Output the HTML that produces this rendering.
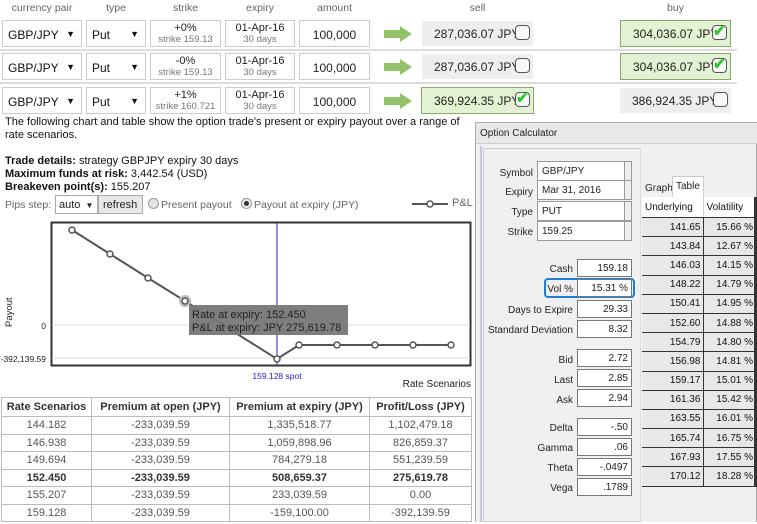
<!DOCTYPE html>
<html><head><meta charset="utf-8"><style>
*{box-sizing:border-box;margin:0;padding:0}
body{width:757px;height:524px;overflow:hidden;background:#fff;font-family:"Liberation Sans",Arial,sans-serif;font-size:11px;color:#222;position:relative}
.a{position:absolute}
.hd{color:#666;font-size:10.5px;text-align:center;top:2px}
.bx{position:absolute;border:1px solid #ccc;background:#fff}
.sel{font-size:12px;padding:7px 0 0 5px;color:#111}
.sel b{position:absolute;right:6px;top:8px;font-size:9px}
.st{text-align:center;font-size:11px;line-height:11px;padding-top:2px;white-space:nowrap;overflow:hidden}
.st span{color:#777;font-size:9.5px}
.am{text-align:center;font-size:12px;padding-top:7px}
.pr{position:absolute;background:#eee;font-size:12px;padding:6px 0 0 12px;height:25px;width:111px;white-space:nowrap}
.pr.g{background:#e2f2d2;border:1px solid #8aa86e}
.cb{position:absolute;right:3px;top:4px;width:15px;height:15px;border:1px solid #555;border-radius:4px;background:#f8f8f8}
.cb.k::after{content:"✔";position:absolute;left:0;top:-4px;color:#2c2;font-size:15px;font-weight:bold}
.arr{position:absolute;width:28px;height:16px}
.sep{position:absolute;left:0;width:737px;height:2px;background:#ddd}
.ft{position:absolute;font-size:10px;text-align:right;width:120px;white-space:nowrap}
.fi{position:absolute;background:#fff;border:1px solid #777;font-size:10px;text-align:right;padding:3px 3px 0 0;height:18px}
.dd{position:absolute;background:#fff;border:1px solid #999;font-size:10px;padding:4px 0 0 4px;height:20px;width:95px}
.dd::after{content:"";position:absolute;right:0;top:0;width:6px;height:18px;border-left:1px solid #999;background:#eee}
table{border-collapse:collapse}
</style></head><body>
<div class="a hd" style="left:2px;width:80px">currency pair</div>
<div class="a hd" style="left:86px;width:60px">type</div>
<div class="a hd" style="left:150px;width:71px">strike</div>
<div class="a hd" style="left:225px;width:70px">expiry</div>
<div class="a hd" style="left:299px;width:71px">amount</div>
<div class="a hd" style="left:422px;width:111px">sell</div>
<div class="a hd" style="left:620px;width:111px">buy</div>

<div class="bx sel" style="left:2px;top:20px;width:80px;height:27px">GBP/JPY<b>▼</b></div>
<div class="bx sel" style="left:86px;top:20px;width:60px;height:27px">Put<b>▼</b></div>
<div class="bx st" style="left:150px;top:20px;width:71px;height:27px">+0%<br><span>strike 159.13</span></div>
<div class="bx st" style="left:225px;top:20px;width:70px;height:27px">01-Apr-16<br><span>30 days</span></div>
<div class="bx am" style="left:299px;top:20px;width:71px;height:27px">100,000</div>
<svg class="arr" style="left:384px;top:26px" viewBox="0 0 28 16"><path d="M0 4H16V0L28 8 16 16V12H0Z" fill="#92c36a"/></svg>
<div class="pr" style="left:422px;top:21px">287,036.07 JPY<div class="cb"></div></div>
<div class="pr g" style="left:620px;top:20px;height:27px">304,036.07 JPY<div class="cb k"></div></div>
<div class="sep" style="top:49px"></div>

<div class="bx sel" style="left:2px;top:53px;width:80px;height:27px">GBP/JPY<b>▼</b></div>
<div class="bx sel" style="left:86px;top:53px;width:60px;height:27px">Put<b>▼</b></div>
<div class="bx st" style="left:150px;top:53px;width:71px;height:27px">-0%<br><span>strike 159.13</span></div>
<div class="bx st" style="left:225px;top:53px;width:70px;height:27px">01-Apr-16<br><span>30 days</span></div>
<div class="bx am" style="left:299px;top:53px;width:71px;height:27px">100,000</div>
<svg class="arr" style="left:384px;top:59px" viewBox="0 0 28 16"><path d="M0 4H16V0L28 8 16 16V12H0Z" fill="#92c36a"/></svg>
<div class="pr" style="left:422px;top:54px">287,036.07 JPY<div class="cb"></div></div>
<div class="pr g" style="left:620px;top:53px;height:27px">304,036.07 JPY<div class="cb k"></div></div>
<div class="sep" style="top:82px"></div>

<div class="bx sel" style="left:2px;top:87px;width:80px;height:27px">GBP/JPY<b>▼</b></div>
<div class="bx sel" style="left:86px;top:87px;width:60px;height:27px">Put<b>▼</b></div>
<div class="bx st" style="left:150px;top:87px;width:71px;height:27px">+1%<br><span>strike 160.721</span></div>
<div class="bx st" style="left:225px;top:87px;width:70px;height:27px">01-Apr-16<br><span>30 days</span></div>
<div class="bx am" style="left:299px;top:87px;width:71px;height:27px">100,000</div>
<svg class="arr" style="left:384px;top:93px" viewBox="0 0 28 16"><path d="M0 4H16V0L28 8 16 16V12H0Z" fill="#92c36a"/></svg>
<div class="pr g" style="left:421px;top:87px;width:113px;height:27px">369,924.35 JPY<div class="cb k"></div></div>
<div class="pr" style="left:620px;top:88px">386,924.35 JPY<div class="cb"></div></div>

<div class="a" style="left:5px;top:116px;width:472px;font-size:11px;line-height:13px;color:#111">The following chart and table show the option trade's present or expiry payout over a range of rate scenarios.</div>
<div class="a" style="left:5px;top:155px;font-size:11px;line-height:13px;color:#111"><b>Trade details:</b> strategy GBPJPY expiry 30 days<br><b>Maximum funds at risk:</b> 3,442.54 (USD)<br><b>Breakeven point(s):</b> 155.207</div>

<div class="a" style="left:5px;top:199px;font-size:10.5px;color:#666">Pips step:</div>
<div class="a" style="left:55px;top:195px;width:43px;height:19px;border:1px solid #aaa;background:#fff;font-size:11px;padding:3px 0 0 3px">auto <span style="font-size:8px;margin-left:2px">▼</span></div>
<div class="a" style="left:98px;top:195px;width:45px;height:19px;border:1px solid #aaa;background:#e8e8e8;font-size:11px;padding:3px 0 0 4px">refresh</div>
<div class="a" style="left:148px;top:198px;width:11px;height:11px;border-radius:50%;border:1px solid #999;background:#e4e4e4"></div>
<div class="a" style="left:161px;top:199px;color:#666;font-size:10.5px">Present payout</div>
<div class="a" style="left:241px;top:198px;width:11px;height:11px;border-radius:50%;border:1px solid #999;background:#eee"><div style="position:absolute;left:2px;top:2px;width:5px;height:5px;border-radius:50%;background:#333"></div></div>
<div class="a" style="left:254px;top:199px;color:#666;font-size:10.5px">Payout at expiry (JPY)</div>
<svg class="a" style="left:410px;top:198px" width="40" height="12"><line x1="2" y1="6" x2="38" y2="6" stroke="#555" stroke-width="2"/><circle cx="20" cy="6" r="3" fill="#fff" stroke="#555" stroke-width="1.5"/></svg>
<div class="a" style="left:452px;top:197px;color:#666">P&amp;L</div>

<svg class="a" style="left:0;top:215px" width="475" height="175">
<rect x="51.5" y="7.5" width="419" height="143" fill="#fff" stroke="#333" stroke-width="2"/>
<line x1="52" y1="110" x2="470" y2="110" stroke="#ddd"/>
<line x1="52" y1="143" x2="470" y2="143" stroke="#ddd"/>
<line x1="277" y1="8" x2="277" y2="150" stroke="#22d" stroke-width="1"/>
<polyline points="72,15 110,39 148,63 185,86 277,144 299,130 337,130 375,130 413,130 451,130" fill="none" stroke="#555" stroke-width="2"/>
<circle cx="185" cy="86" r="6" fill="#bbb"/>
<g fill="#fff" stroke="#555" stroke-width="1.5"><circle cx="72" cy="15" r="3"/><circle cx="110" cy="39" r="3"/><circle cx="148" cy="63" r="3"/><circle cx="185" cy="86" r="3"/><circle cx="277" cy="144" r="3"/><circle cx="299" cy="130" r="3"/><circle cx="337" cy="130" r="3"/><circle cx="375" cy="130" r="3"/><circle cx="413" cy="130" r="3"/><circle cx="451" cy="130" r="3"/></g>
<rect x="189" y="90" width="159" height="30" fill="#777" opacity="0.95"/>
<text x="192" y="103" font-size="11" fill="#222" font-family="Liberation Sans">Rate at expiry: 152.450</text>
<text x="192" y="116" font-size="11" fill="#222" font-family="Liberation Sans">P&amp;L at expiry: JPY 275,619.78</text>
<text x="46" y="114" font-size="8.5" text-anchor="end" fill="#222" font-family="Liberation Sans">0</text>
<text x="46" y="147" font-size="8.5" text-anchor="end" fill="#222" font-family="Liberation Sans">-392,139.59</text>
<text x="277" y="164" font-size="8.5" text-anchor="middle" fill="#22d" font-family="Liberation Sans">159.128 spot</text>
<text x="471" y="172" font-size="10" text-anchor="end" fill="#222" font-family="Liberation Sans">Rate Scenarios</text>
<text transform="translate(12,112) rotate(-90)" font-size="9.5" fill="#222" font-family="Liberation Sans">Payout</text>
</svg>

<table class="a" style="left:1px;top:397px;width:471px;font-size:11px;color:#555;text-align:center">
<tr style="font-weight:bold;color:#333;height:19px"><td style="border:1px solid #bbb;width:90px">Rate Scenarios</td><td style="border:1px solid #bbb;width:138px">Premium at open (JPY)</td><td style="border:1px solid #bbb;width:140px">Premium at expiry (JPY)</td><td style="border:1px solid #bbb">Profit/Loss (JPY)</td></tr>
<tr style="height:17.5px"><td style="border:1px solid #bbb">144.182</td><td style="border:1px solid #bbb">-233,039.59</td><td style="border:1px solid #bbb">1,335,518.77</td><td style="border:1px solid #bbb">1,102,479.18</td></tr>
<tr style="height:17.5px"><td style="border:1px solid #bbb">146.938</td><td style="border:1px solid #bbb">-233,039.59</td><td style="border:1px solid #bbb">1,059,898.96</td><td style="border:1px solid #bbb">826,859.37</td></tr>
<tr style="height:17.5px"><td style="border:1px solid #bbb">149.694</td><td style="border:1px solid #bbb">-233,039.59</td><td style="border:1px solid #bbb">784,279.18</td><td style="border:1px solid #bbb">551,239.59</td></tr>
<tr style="height:17.5px;font-weight:bold;color:#333"><td style="border:1px solid #bbb">152.450</td><td style="border:1px solid #bbb">-233,039.59</td><td style="border:1px solid #bbb">508,659.37</td><td style="border:1px solid #bbb">275,619.78</td></tr>
<tr style="height:17.5px"><td style="border:1px solid #bbb">155.207</td><td style="border:1px solid #bbb">-233,039.59</td><td style="border:1px solid #bbb">233,039.59</td><td style="border:1px solid #bbb">0.00</td></tr>
<tr style="height:17.5px"><td style="border:1px solid #bbb">159.128</td><td style="border:1px solid #bbb">-233,039.59</td><td style="border:1px solid #bbb">-159,100.00</td><td style="border:1px solid #bbb">-392,139.59</td></tr>
</table>

<div class="a" style="left:475px;top:122px;width:282px;height:402px;background:#fff"></div>
<div class="a" style="left:475px;top:122px;width:282px;height:400px;background:#f0f0f0;border:1px solid #aaa;border-bottom:none"></div>
<div class="a" style="left:476px;top:123px;width:281px;height:21px;background:#e8e8e8;border-bottom:1px solid #ccc;padding:5px 0 0 4px;color:#222;font-size:10px">Option Calculator</div>
<div class="a" style="left:483px;top:148px;width:158px;height:374px;border:1px solid #ccc;border-right:1px solid #ddd;background:#f0f0f0"></div>
<div class="a" style="left:480px;top:146px;width:2px;height:376px;background:#c8c8d8"></div>

<div class="ft" style="left:413px;top:168px">Symbol</div><div class="dd" style="left:537px;top:161px">GBP/JPY</div>
<div class="ft" style="left:413px;top:187px">Expiry</div><div class="dd" style="left:537px;top:180px">Mar 31, 2016</div>
<div class="ft" style="left:413px;top:207px">Type</div><div class="dd" style="left:537px;top:201px">PUT</div>
<div class="ft" style="left:413px;top:227px">Strike</div><div class="dd" style="left:537px;top:221px">159.25</div>

<div class="ft" style="left:453px;top:264px">Cash</div><div class="fi" style="left:577px;top:259px;width:55px">159.18</div>
<div class="a" style="left:544px;top:278px;width:91px;height:20px;border:2px solid #1a7fd6;border-radius:4px"></div>
<div class="ft" style="left:453px;top:284px">Vol %</div><div class="fi" style="left:577px;top:279px;width:55px">15.31 %</div>
<div class="ft" style="left:453px;top:305px">Days to Expire</div><div class="fi" style="left:577px;top:300px;width:55px">29.33</div>
<div class="ft" style="left:453px;top:325px">Standard Deviation</div><div class="fi" style="left:577px;top:320px;width:55px">8.32</div>
<div class="ft" style="left:453px;top:355px">Bid</div><div class="fi" style="left:577px;top:349px;width:55px">2.72</div>
<div class="ft" style="left:453px;top:375px">Last</div><div class="fi" style="left:577px;top:369px;width:55px">2.85</div>
<div class="ft" style="left:453px;top:395px">Ask</div><div class="fi" style="left:577px;top:389px;width:55px">2.94</div>
<div class="ft" style="left:453px;top:423px">Delta</div><div class="fi" style="left:577px;top:418px;width:55px">-.50</div>
<div class="ft" style="left:453px;top:443px">Gamma</div><div class="fi" style="left:577px;top:438px;width:55px">.06</div>
<div class="ft" style="left:453px;top:463px">Theta</div><div class="fi" style="left:577px;top:458px;width:55px">-.0497</div>
<div class="ft" style="left:453px;top:483px">Vega</div><div class="fi" style="left:577px;top:478px;width:55px">.1789</div>

<div class="a" style="left:643px;top:180px;width:29px;height:17px;font-size:10px;padding:3px 0 0 2px">Graph</div>
<div class="a" style="left:672px;top:176px;width:32px;height:21px;background:#fff;border:1px solid #ccc;border-bottom:none;font-size:10px;padding:4px 0 0 3px">Table</div>
<table class="a" style="left:642px;top:197px;width:115px;font-size:10px;color:#111">
<tr style="height:20px;background:#fff"><td style="width:61px;border-right:1px solid #ccc;padding-left:3px">Underlying</td><td style="padding-left:3px">Volatility</td></tr>
</table>
<table class="a" style="left:642px;top:217px;width:115px;font-size:10px;color:#111;text-align:right;background:#e8e8e8">
<tr style="height:19.2px"><td style="width:61px;border:1px solid #333;border-left:none;padding-right:2px">141.65</td><td style="border:1px solid #333;border-right:none;padding-right:4px">15.66 %</td></tr>
<tr style="height:19.2px"><td style="border:1px solid #333;border-left:none;padding-right:2px">143.84</td><td style="border:1px solid #333;border-right:none;padding-right:4px">12.67 %</td></tr>
<tr style="height:19.2px"><td style="border:1px solid #333;border-left:none;padding-right:2px">146.03</td><td style="border:1px solid #333;border-right:none;padding-right:4px">14.15 %</td></tr>
<tr style="height:19.2px"><td style="border:1px solid #333;border-left:none;padding-right:2px">148.22</td><td style="border:1px solid #333;border-right:none;padding-right:4px">14.79 %</td></tr>
<tr style="height:19.2px"><td style="border:1px solid #333;border-left:none;padding-right:2px">150.41</td><td style="border:1px solid #333;border-right:none;padding-right:4px">14.95 %</td></tr>
<tr style="height:19.2px"><td style="border:1px solid #333;border-left:none;padding-right:2px">152.60</td><td style="border:1px solid #333;border-right:none;padding-right:4px">14.88 %</td></tr>
<tr style="height:19.2px"><td style="border:1px solid #333;border-left:none;padding-right:2px">154.79</td><td style="border:1px solid #333;border-right:none;padding-right:4px">14.80 %</td></tr>
<tr style="height:19.2px"><td style="border:1px solid #333;border-left:none;padding-right:2px">156.98</td><td style="border:1px solid #333;border-right:none;padding-right:4px">14.81 %</td></tr>
<tr style="height:19.2px"><td style="border:1px solid #333;border-left:none;padding-right:2px">159.17</td><td style="border:1px solid #333;border-right:none;padding-right:4px">15.01 %</td></tr>
<tr style="height:19.2px"><td style="border:1px solid #333;border-left:none;padding-right:2px">161.36</td><td style="border:1px solid #333;border-right:none;padding-right:4px">15.42 %</td></tr>
<tr style="height:19.2px"><td style="border:1px solid #333;border-left:none;padding-right:2px">163.55</td><td style="border:1px solid #333;border-right:none;padding-right:4px">16.01 %</td></tr>
<tr style="height:19.2px"><td style="border:1px solid #333;border-left:none;padding-right:2px">165.74</td><td style="border:1px solid #333;border-right:none;padding-right:4px">16.75 %</td></tr>
<tr style="height:19.2px"><td style="border:1px solid #333;border-left:none;padding-right:2px">167.93</td><td style="border:1px solid #333;border-right:none;padding-right:4px">17.55 %</td></tr>
<tr style="height:19.2px"><td style="border:1px solid #333;border-left:none;padding-right:2px">170.12</td><td style="border:1px solid #333;border-right:none;padding-right:4px">18.28 %</td></tr>
</table>
<div class="a" style="left:754px;top:197px;width:3px;height:290px;background:#333"></div>
</body></html>
